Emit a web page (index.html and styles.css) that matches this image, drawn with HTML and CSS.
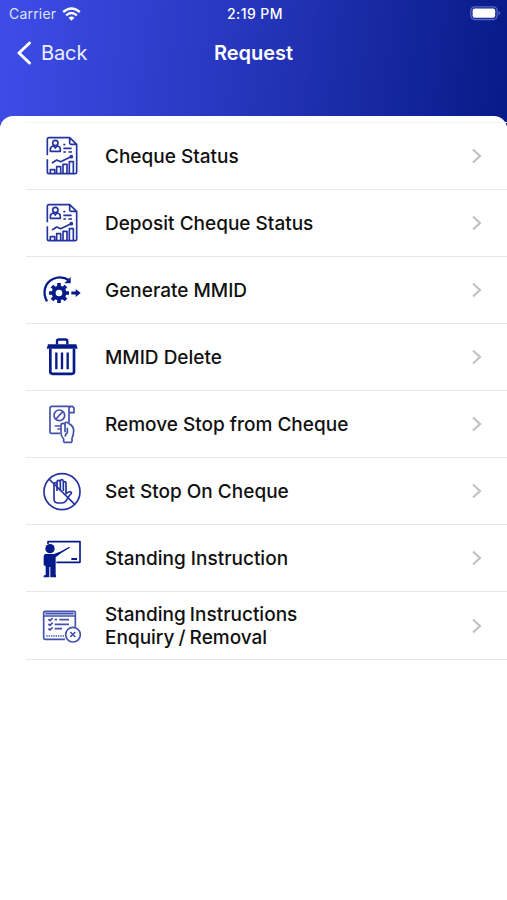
FILE: index.html
```html
<!DOCTYPE html>
<html lang="en">
<head>
<meta charset="utf-8">
<title>Request</title>
<link rel="stylesheet" href="styles.css">
</head>
<body>
<svg width="0" height="0" class="defs">
  <symbol id="report" viewBox="0 0 195 195">
    <g transform="translate(0 6)">
      <path d="M52 91V43q0-5 5-5h62l21 20v84q0 4-5 4H57q-5 0-5-5v-38M119 38v17q0 3 4 3h17"/>
      <circle cx="76" cy="54" r="8"/>
      <path d="M61 79v-6q0-9 10-10l5 6 5-6q10 1 10 10v6zM100 59h6M100 70h25M100 81h8M115 81h11M66 114l14-9 12 5 31-15"/>
      <circle cx="124" cy="95" r="3"/>
      <path d="M61 145v-11h13v11M80 145v-20h12v20M99 145v-27h12v27M118 145v-35h12v35"/>
    </g>
  </symbol>
  <symbol id="chev" viewBox="0 0 12 18"><path d="M2 2.5 9 9l-7 6.5"/></symbol>
</svg>
<header class="header">
  <div class="status">
    <div class="carrier"><span>Carrier</span>
      <svg class="wifi" viewBox="0 0 56 42"><path d="M3 15Q28-6 53 15M12 25q16-14 32 0" fill="none" stroke="#fff" stroke-width="7"/><path d="M19 32q9-7 18 0l-9 9z" fill="#fff"/></svg>
    </div>
    <div class="time">2:19 PM</div>
    <svg class="battery" viewBox="0 0 31 15"><rect x=".8" y=".8" width="26.4" height="12.7" rx="4" fill="none" stroke="#5767c4" stroke-width="1.3"/><rect x="2.6" y="2.6" width="22.6" height="9.1" rx="2" fill="#fff"/><path d="M28.6 5q3.2 2.1 0 4.3z" fill="#5767c4"/></svg>
  </div>
  <nav class="nav">
    <div class="back"><svg viewBox="0 0 16 24"><path d="M13.5 2 3 12l10.500 10" fill="none" stroke="#fff" stroke-width="3" stroke-linecap="round" stroke-linejoin="round"/></svg><span>Back</span></div>
    <h1>Request</h1>
  </nav>
</header>
<main class="card">
  <ul class="list">
    <li><svg class="icon"><use href="#report"/></svg><span class="label">Cheque Status</span><svg class="chev"><use href="#chev"/></svg></li>
    <li><svg class="icon"><use href="#report"/></svg><span class="label">Deposit Cheque Status</span><svg class="chev"><use href="#chev"/></svg></li>
    <li><svg class="icon bold" viewBox="0 0 195 195">
      <path d="M51 133C36 106 45 77 69 66q26-11 48 4" stroke-width="7"/>
      <path class="fill" d="M122 60v19h-19z"/>
      <circle cx="87" cy="108" r="16" stroke-width="12"/>
      <path d="M87 78v12M87 126v12M57 108h12M105 108h12M66 87l8 8M100 121l8 8M66 129l8-8M100 95l8-8" stroke-width="11"/>
      <path d="M124 108h16" stroke-width="9"/><path class="fill" d="M137 96l15 12-15 12z"/>
    </svg><span class="label">Generate MMID</span><svg class="chev"><use href="#chev"/></svg></li>
    <li><svg class="icon bold" viewBox="0 0 195 195">
      <g transform="translate(0 1.500)"><path d="M81 60V50q0-5 6-5h19q6 0 6 5v10" stroke-width="7"/>
      <path class="fill" d="M54 59h85l4 14H50z"/>
      <path d="M61 73v69q0 6 7 6h57q7 0 7-6V73" stroke-width="8"/>
      <path d="M79 84v50M96 84v50M113 84v50" stroke-width="7"/></g>
    </svg><span class="label">MMID Delete</span><svg class="chev"><use href="#chev"/></svg></li>
    <li><svg class="icon thin" viewBox="0 0 195 195">
      <path d="M90 124H65q-5 0-5-5V49q0-6 6-6h58q-7 0-7 7v42M124 43q8 0 8 8v11h-14"/>
      <circle cx="88" cy="70" r="16"/><path d="M78 81l20-22M74 102h17M82 111h9"/>
      <path d="M101 151v-10q-8-8-8-18v-23q0-6 6-6t6 6v21M105 121V94q0-4 6-3l12 8q8 6 8 17 0 12-5 23v12M112 107v15q-7 4-6 12M101 151h25"/>
    </svg><span class="label">Remove Stop from Cheque</span><svg class="chev"><use href="#chev"/></svg></li>
    <li><svg class="icon" viewBox="0 0 195 195">
      <circle cx="96" cy="98" r="54"/><path d="M57 60l78 77"/>
      <path d="M72 98V76q0-5 4-5t5 5v20M81 96V69q0-5 5-5t5 5v27M91 96V67q0-5 4-5t5 5v29M100 96V72q0-4 4-4t4 4v32q10-9 16-4 2 3-6 10l-11 17q-4 5-11 5H84q-12 0-12-12V98"/>
    </svg><span class="label">Set Stop On Cheque</span><svg class="chev"><use href="#chev"/></svg></li>
    <li><svg class="icon bold" viewBox="0 0 195 195">
      <path d="M54 54v-7h96v62H79" stroke-width="5"/>
      <circle class="fill" cx="60" cy="68" r="14"/>
      <path class="fill" d="M47 84h25l21-8 25-14 2 3-26 16-17 13v53h1v7H61v-31h-3v31H41v-5l6-3v-25l-6-4V91q0-7 6-7z"/>
      <path d="M124 99h17" stroke-width="6"/>
    </svg><span class="label">Standing Instruction</span><svg class="chev"><use href="#chev"/></svg></li>
    <li><svg class="icon thin" viewBox="0 0 195 195">
      <path d="M105 139H45q-4 0-4-4V59q0-4 4-4h87q4 0 4 4v42M41 69h95M46 62h85"/>
      <path d="M55 79l5 4 8-8M55 93l5 4 8-8M55 107l5 4 8-8" stroke-width="5"/>
      <path d="M74 80h7M88 80h29M74 94h43M74 107h22" stroke-width="5"/>
      <path d="M49 129h57" stroke-width="5" stroke-dasharray="4 3"/>
      <circle cx="129" cy="125" r="22"/><path d="M121 117l15 15M136 117l-15 15" stroke-width="5"/>
    </svg><span class="label tight">Standing Instructions<br>Enquiry / Removal</span><svg class="chev"><use href="#chev"/></svg></li>
  </ul>
</main>
</body>
</html>
```
FILE: styles.css
```css
* { box-sizing: border-box; }
body {
  margin: 0;
  height: 900px;
  overflow: hidden;
  font-family: Inter, "Liberation Sans", sans-serif;
  background: #fff;
}
.defs { display: none; }
.header {
  height: 126px;
  color: #fff;
  background: linear-gradient(97deg, #3e4de8 0%, #2535ba 50%, #071a86 100%);
}
.status {
  height: 27px;
  display: grid;
  grid-template-columns: 1fr auto 1fr;
  align-items: center;
  padding: 0 6px 0 9px;
  font-size: 14px;
}
.carrier { display: flex; align-items: center; gap: 6px; color: #dfe2fb; letter-spacing: .2px; }
.wifi { width: 19px; height: 14px; }
.time { font-weight: 500; font-size: 14px; letter-spacing: .4px; }
.battery { width: 31px; height: 15px; justify-self: end; }
.nav {
  height: 51px;
  display: grid;
  grid-template-columns: 1fr auto 1fr;
  align-items: center;
  padding: 0 16px;
}
.back { display: flex; align-items: center; gap: 9px; font-size: 20px; color: #eef0ff; letter-spacing: -.1px; }
.back svg { width: 16px; height: 24px; }
h1 { margin: 0; font-size: 20px; font-weight: 600; }
.card {
  margin-top: -10.500px;
  height: 785px;
  padding-top: 6px;
  border-radius: 13px 13px 0 0;
  background: #fff;
}
.list {
  list-style: none;
  margin: 0 0 0 26px;
  padding: 0;
  border-top: 1px solid #f4f3f4;
}
.list li {
  height: 67.150px;
  display: flex;
  align-items: center;
  padding: 0 24px 0 4px;
  border-bottom: 1px solid #e8e8e9;
}
.icon {
  width: 65px;
  height: 65px;
  flex: none;
  fill: none;
  stroke: #24339f;
  stroke-width: 5;
  stroke-linejoin: round;
}
.thin { stroke: #4350ad; stroke-width: 5; }
.bold { stroke: #061b8b; }
.fill { fill: #061b8b; stroke: none; }
.label {
  flex: 1;
  margin-left: 10px;
  padding-top: 1px;
  font-size: 19px;
  line-height: 23px;
  font-weight: 500;
  color: #111;
}
.tight { padding-top: 0; word-spacing: -1px; }
.chev {
  width: 12px;
  height: 18px;
  fill: none;
  stroke: #c2c2c5;
  stroke-width: 2.200;
}
```
